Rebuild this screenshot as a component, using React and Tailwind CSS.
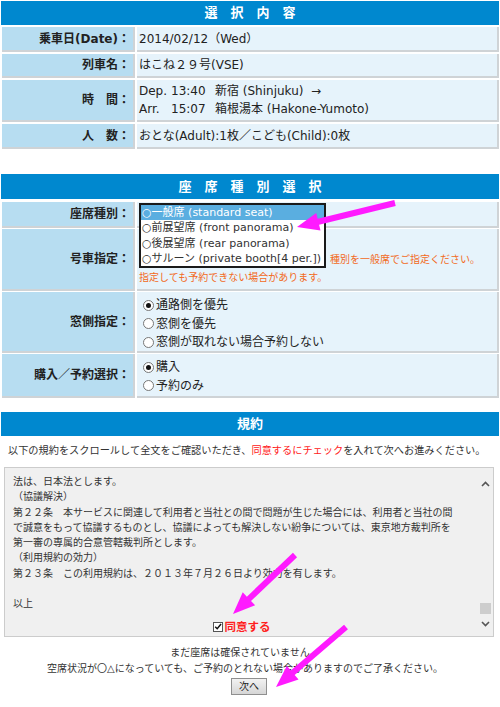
import React from "react";

const FONT = "'DejaVu Sans', 'Noto Sans CJK JP', sans-serif";

const Header = ({ children, className = "" }) => (
  <div
    className={`bg-[#0088cf] mx-[1px] flex items-center justify-center text-white font-bold text-[13px] ${className}`}
  >
    {children}
  </div>
);

const Row = ({ label, h, children, valueClass = "" }) => (
  <>
    <div
      className={`bg-[#b7ddf1] border-r-2 border-b-2 border-[#cfd3d6] flex items-center justify-end pr-[3px] font-bold text-[12px] text-[#222] ${h}`}
    >
      {label}
    </div>
    <div
      className={`bg-[#e6f3fb] border-r-2 border-b-2 border-[#cfd3d6] pl-[2px] text-[12px] text-[#222] ${h} ${valueClass}`}
    >
      {children}
    </div>
  </>
);

const Radio = ({ on, children }) => (
  <div className="flex items-center h-[18.5px]">
    <span className="w-[11px] h-[11px] rounded-full border border-[#777] bg-white flex items-center justify-center ml-[4px] mr-[2px]">
      {on && <span className="w-[5px] h-[5px] rounded-full bg-[#111]" />}
    </span>
    <span>{children}</span>
  </div>
);

// arrow polygon: shaft + head, computed from tail and tip
const arrowPoints = (x1, y1, x2, y2) => {
  const dx = x2 - x1;
  const dy = y2 - y1;
  const len = Math.hypot(dx, dy);
  const ux = dx / len;
  const uy = dy / len;
  const px = -uy;
  const py = ux;
  const hl = 22;
  const hw = 9;
  const sw = 3;
  const bx = x2 - ux * hl;
  const by = y2 - uy * hl;
  const pts = [
    [x1 + px * sw, y1 + py * sw],
    [bx + px * sw, by + py * sw],
    [bx + px * hw, by + py * hw],
    [x2, y2],
    [bx - px * hw, by - py * hw],
    [bx - px * sw, by - py * sw],
    [x1 - px * sw, y1 - py * sw],
  ];
  return pts.map((p) => p.join(",")).join(" ");
};

const terms = [
  "法は、日本法とします。",
  "（協議解決）",
  "第２２条　本サービスに関連して利用者と当社との間で問題が生じた場合には、利用者と当社の間",
  "で誠意をもって協議するものとし、協議によっても解決しない紛争については、東京地方裁判所を",
  "第一審の専属的合意管轄裁判所とします。",
  "（利用規約の効力）",
  "第２３条　この利用規約は、２０１３年７月２６日より効力を有します。",
  "\u00a0",
  "以上",
];

const seatOptions = [
  "○一般席 (standard seat)",
  "○前展望席 (front panorama)",
  "○後展望席 (rear panorama)",
  "○サルーン (private booth[4 per.])",
];

export default function App() {
  return (
    <div
      className="relative w-[500px] h-[707px] bg-white pt-[1px] overflow-hidden"
      style={{ fontFamily: FONT }}
    >
      {/* 選択内容 */}
      <Header className="h-[24px] tracking-[1em] pl-[1em]">選択内容</Header>
      <div className="grid grid-cols-[133px_1fr] gap-x-[2px] gap-y-[2px] mt-[2px] pl-[2px] pr-[1px]">
        <Row label="乗車日(Date)：" h="h-[25px]" valueClass="flex items-center">
          2014/02/12（Wed）
        </Row>
        <Row label="列車名：" h="h-[24px]" valueClass="flex items-center">
          はこね２９号(VSE)
        </Row>
        <Row label="時　間：" h="h-[42px]" valueClass="flex flex-col justify-center leading-[18px]">
          <div className="whitespace-nowrap">
            <span className="inline-block w-[32px]">Dep.</span>
            <span className="inline-block w-[44px]">13:40</span>
            新宿 (Shinjuku)&nbsp;&nbsp;→
          </div>
          <div className="whitespace-nowrap">
            <span className="inline-block w-[32px]">Arr.</span>
            <span className="inline-block w-[44px]">15:07</span>
            箱根湯本 (Hakone-Yumoto)
          </div>
        </Row>
        <Row label="人　数：" h="h-[25px]" valueClass="flex items-center">
          おとな(Adult):1枚／こども(Child):0枚
        </Row>
      </div>

      {/* 座席種別選択 */}
      <Header className="h-[25px] mt-[25px] tracking-[1em] pl-[1em]">座席種別選択</Header>
      <div className="grid grid-cols-[133px_1fr] gap-x-[2px] gap-y-[1px] mt-[3px] pl-[2px] pr-[1px]">
        <Row label="座席種別：" h="h-[26px]" valueClass="relative">
          <div className="absolute left-[2px] top-[1px] z-10 w-[187px] h-[65px] border-2 border-[#1a1a1a] bg-white text-[11px] leading-[15.25px] text-[#333]">
            {seatOptions.map((o, i) => (
              <div
                key={o}
                className={`pl-[1px] whitespace-nowrap ${i === 0 ? "bg-[#5aaee0] text-white" : ""}`}
              >
                {o}
              </div>
            ))}
          </div>
        </Row>
        <Row label="号車指定：" h="h-[62px]" valueClass="pt-[22px]">
          <div className="text-[10px] leading-[18px] text-[#f26a1b] whitespace-nowrap">
            <div className="pl-[191px]">種別を一般席でご指定ください。</div>
            <div>指定しても予約できない場合があります。</div>
          </div>
        </Row>
        <Row label="窓側指定：" h="h-[61px]" valueClass="pt-[4px]">
          <Radio on>通路側を優先</Radio>
          <Radio>窓側を優先</Radio>
          <Radio>窓側が取れない場合予約しない</Radio>
        </Row>
        <Row label="購入／予約選択：" h="h-[44px]" valueClass="pt-[4px]">
          <Radio on>購入</Radio>
          <Radio>予約のみ</Radio>
        </Row>
      </div>

      {/* 規約 */}
      <Header className="h-[24px] mt-[14px]">規約</Header>
      <div className="mt-[7px] pl-[8px] text-[10.2px] leading-[16px] text-[#333] whitespace-nowrap">
        以下の規約をスクロールして全文をご確認いただき、
        <span className="text-[#ff2020]">同意するにチェック</span>
        を入れて次へお進みください。
      </div>

      <div className="mt-[8px] mx-[4px] w-[490px] h-[170px] border border-[#cccccc] bg-[#f0f0f0] flex">
        <div className="flex-1 pl-[8px] pt-[6px] text-[10px] leading-[15.3px] text-[#333] whitespace-nowrap overflow-hidden">
          {terms.map((t, i) => (
            <div key={i}>{t}</div>
          ))}
          <div className="flex items-center justify-center mt-[7px] pr-[8px] h-[16px]">
            <span className="w-[10px] h-[10px] border border-[#555] bg-white flex items-center justify-center mr-[2px]">
              <svg width="9" height="9" viewBox="0 0 10 10">
                <path d="M1.5 5.2 L4 7.8 L8.8 1.8" fill="none" stroke="#111" strokeWidth="1.8" />
              </svg>
            </span>
            <span className="text-[#ff2020] font-bold text-[11.5px] leading-[16px]">同意する</span>
          </div>
        </div>
        <div className="w-[14px] flex flex-col items-center pt-[13px] pb-[9px] mr-[1px]">
          <svg width="9" height="6" viewBox="0 0 9 6">
            <path d="M1 5 L4.5 1.5 L8 5" fill="none" stroke="#555" strokeWidth="1.6" />
          </svg>
          <div className="flex-1" />
          <div className="w-[11px] h-[11px] bg-[#cdcdcd]" />
          <div className="h-[7px]" />
          <svg width="9" height="6" viewBox="0 0 9 6">
            <path d="M1 1 L4.5 4.5 L8 1" fill="none" stroke="#555" strokeWidth="1.6" />
          </svg>
        </div>
      </div>

      <div className="mt-[8px] text-center text-[10px] leading-[16px] text-[#333] pr-[10px]">
        <div>まだ座席は確保されていません。</div>
        <div>空席状況が〇△になっていても、ご予約のとれない場合がありますのでご了承ください。</div>
        <div className="flex justify-center mt-[1px] pl-[8px]">
          <button className="w-[36px] h-[17px] border border-[#8f8f8f] bg-gradient-to-b from-[#f2f2f2] to-[#d6d6d6] text-[10px] text-[#222] leading-none">
            次へ
          </button>
        </div>
      </div>

      {/* annotation arrows */}
      <svg className="absolute inset-0 pointer-events-none z-20" width="500" height="707">
        <polygon points={arrowPoints(395, 203, 297, 227)} fill="#ff1aff" />
        <polygon points={arrowPoints(295, 555, 233, 614)} fill="#ff1aff" />
        <polygon points={arrowPoints(346, 627, 276, 687)} fill="#ff1aff" />
      </svg>
    </div>
  );
}
